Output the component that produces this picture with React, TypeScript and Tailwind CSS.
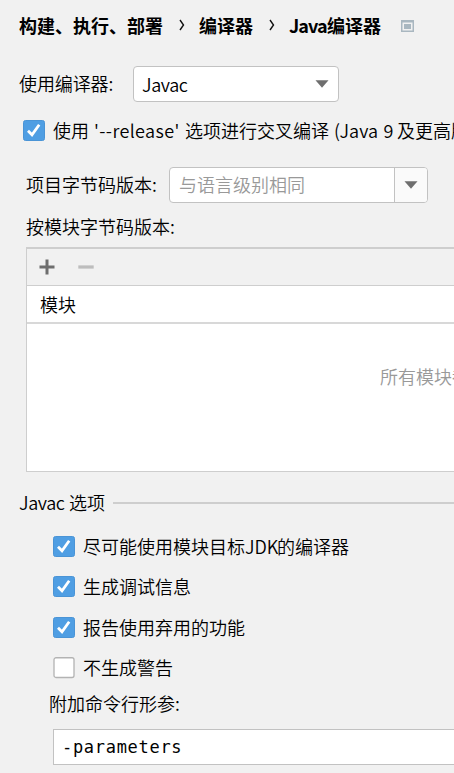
import type { ReactNode } from "react";

function Check({ checked = true }: { checked?: boolean }) {
  return (
    <svg className="h-[22px] w-[22px] shrink-0" viewBox="0 0 22 22">
      {checked ? (
        <>
          <rect x="0.5" y="0.5" width="21" height="20" rx="2" fill="#4f9ee3" stroke="#4a94d6" />
          <path d="M5 10.8L9 14.8L16.2 4.8" fill="none" stroke="#fff" strokeWidth="2.8" />
        </>
      ) : (
        <rect x="1" y="0.75" width="20" height="19.75" rx="2" fill="#fff" stroke="#b3b3b3" strokeWidth="1.3" />
      )}
    </svg>
  );
}

function Arrow() {
  return (
    <svg className="h-[8px] w-[14px] shrink-0" viewBox="0 0 14 8">
      <path d="M0.5 0.3H13.5L7 7.8Z" fill="#6e6e6e" />
    </svg>
  );
}

function Chevron() {
  return (
    <svg className="mt-[-2px] h-[12px] w-[6px] shrink-0" viewBox="0 0 6 12">
      <path d="M1 1L4.5 6L1 11" fill="none" stroke="#111" strokeWidth="1.4" />
    </svg>
  );
}

function Option({ checked = true, children }: { checked?: boolean; children: ReactNode }) {
  return (
    <label className="flex h-[22px] items-center">
      <Check checked={checked} />
      <span className="ml-[8px] pb-[2px]">{children}</span>
    </label>
  );
}

export default function App() {
  return (
    <div className="flex h-[773px] w-[454px] flex-col overflow-hidden whitespace-nowrap bg-[#f1f1f1] font-['Noto_Sans_CJK_SC_DemiLight','Noto_Sans_CJK_SC',sans-serif] text-[18px] leading-[24px] text-black">
      <header className="flex h-[52px] shrink-0 items-center pl-[19px] font-['Noto_Sans_CJK_SC',sans-serif] font-bold">
        <span className="pb-[2px]">构建、执行、部署</span>
        <span className="ml-[16px] flex w-[20px]"><Chevron /></span>
        <span className="pb-[2px]">编译器</span>
        <span className="ml-[16px] flex w-[20px]"><Chevron /></span>
        <span className="flex pb-[2px]">
          <span className="w-[38px] tracking-[-0.9px]">Java</span>
          <span>编译器</span>
        </span>
        <svg className="ml-[20px] h-[12px] w-[13px]" viewBox="0 0 13 12">
          <rect width="13" height="12" fill="#a9b7c0" />
          <rect x="1.5" y="2.5" width="10" height="8" fill="#f1f1f1" />
          <rect x="3" y="4" width="7" height="5" fill="#a9b7c0" />
        </svg>
      </header>

      <div className="mt-[14px] flex h-[36px] shrink-0 items-center pl-[19px]">
        <span className="w-[114px] pb-[2px] tracking-[-0.1px]">使用编译器:</span>
        <div className="flex h-[36px] w-[206px] items-center justify-between rounded-[4px] border border-[#c2c2c2] bg-white pl-[8px] pr-[9px]">
          <span className="tracking-[-0.4px]">Javac</span>
          <Arrow />
        </div>
      </div>

      <label className="mt-[18px] flex h-[22px] shrink-0 items-center pl-[23px]">
        <Check />
        <span className="ml-[8px] flex pb-[2px]">
          <span className="w-[41px]">使用</span>
          <span className="w-[91px] tracking-[0.4px]">'--release'</span>
          <span className="w-[149px]">选项进行交叉编译</span>
          <span className="w-[63px] [word-spacing:1.5px]">(Java 9</span>
          <span>及更高版本)</span>
        </span>
      </label>

      <div className="mt-[25px] flex h-[36px] shrink-0 items-center pl-[26px]">
        <span className="w-[143px] pb-[2px]">项目字节码版本:</span>
        <div className="flex h-[36px] w-[259px] overflow-hidden rounded-[4px] border border-[#c2c2c2] bg-white">
          <div className="flex w-[225px] items-center border-r border-[#c2c2c2] pb-[2px] pl-[9px] text-[#999]">与语言级别相同</div>
          <div className="flex flex-1 items-center justify-center bg-[#fafafa]"><Arrow /></div>
        </div>
      </div>

      <div className="mt-[11px] h-[24px] shrink-0 pl-[26px]">按模块字节码版本:</div>

      <section className="ml-[26px] mt-[9px] flex h-[225px] shrink-0 flex-col border-b border-l border-t-2 border-[#cecece] bg-white">
        <div className="flex h-[37px] shrink-0 items-center gap-[23px] border-b border-[#cecece] bg-[#f1f1f1] pl-[12px]">
          <svg className="h-[16px] w-[16px]" viewBox="0 0 16 16">
            <path d="M0.5 8H15.5M8 0.5V15.5" stroke="#6e6e6e" strokeWidth="3" />
          </svg>
          <svg className="h-[16px] w-[16px]" viewBox="0 0 16 16">
            <path d="M0.3 8H15.7" stroke="#bdbdbd" strokeWidth="3.2" />
          </svg>
        </div>
        <div className="flex h-[38px] shrink-0 items-center border-b-2 border-[#d8d8d8] pl-[13px]">模块</div>
        <div className="overflow-hidden pl-[353px] pt-[40px] text-[#999]">所有模块都将使用项目字节码版本</div>
      </section>

      <div className="mt-[19px] flex h-[24px] shrink-0 items-center pl-[19px]">
        <span className="w-[50px] pb-[2px] tracking-[-0.4px]">Javac</span>
        <span className="pb-[2px]">选项</span>
        <span className="ml-[8px] h-[2px] flex-1 bg-[#cecece]" />
      </div>

      <div className="mt-[21px] flex shrink-0 flex-col pl-[53px]">
        <Option>
          <span className="flex">
            <span>尽可能使用模块目标</span>
            <span className="w-[32px]">JDK</span>
            <span>的编译器</span>
          </span>
        </Option>
        <div className="mt-[18px]"><Option>生成调试信息</Option></div>
        <div className="mt-[19px]"><Option>报告使用弃用的功能</Option></div>
        <div className="mt-[18px]"><Option checked={false}>不生成警告</Option></div>
      </div>

      <div className="mt-[12px] h-[24px] shrink-0 pl-[49px]">附加命令行形参:</div>
      <div className="ml-[53px] mt-[14px] flex h-[36px] shrink-0 items-center border-y border-l border-[#c2c2c2] bg-white pl-[8px] font-['DejaVu_Sans_Mono',monospace] text-[17px] tracking-[0.7px]">
        -parameters
      </div>
    </div>
  );
}
